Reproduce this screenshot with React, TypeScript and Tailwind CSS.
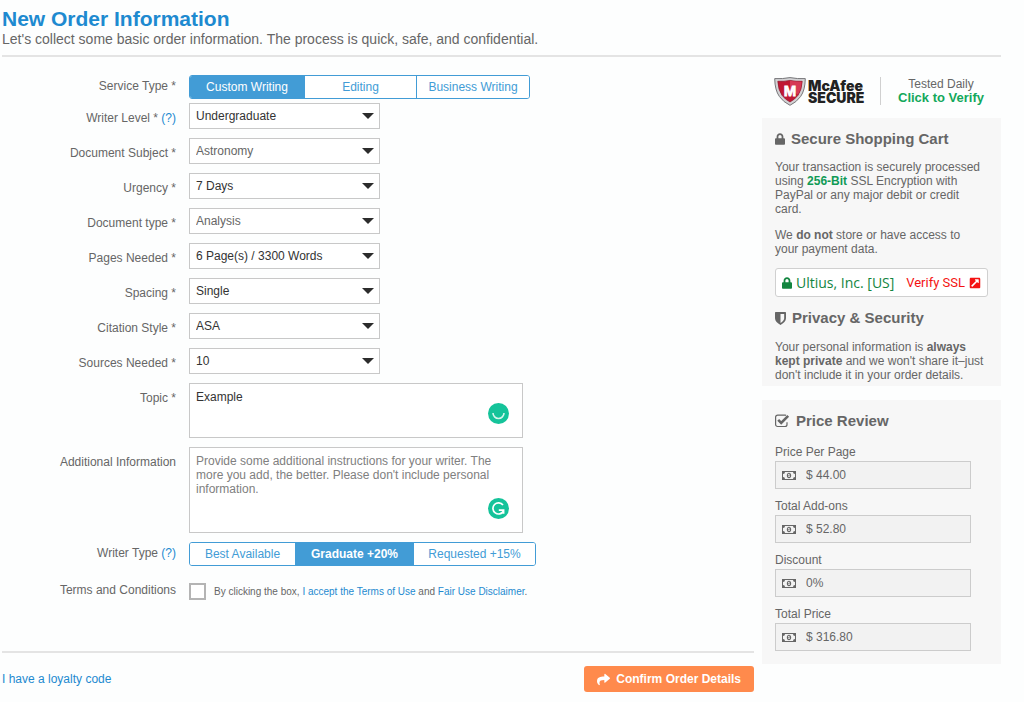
import React, { useState } from 'react';
import { FaExternalLinkSquareAlt, FaLock, FaShare } from 'react-icons/fa';

const selectFields = [
  { id: 'level', label: 'Writer Level *', help: true, value: 'Undergraduate', others: ['High School', 'Graduate'] },
  { id: 'subject', label: 'Document Subject *', value: 'Astronomy', muted: true, others: ['Biology', 'History'] },
  { id: 'urgency', label: 'Urgency *', value: '7 Days', others: ['3 Days', '24 Hours'] },
  { id: 'document', label: 'Document type *', value: 'Analysis', muted: true, others: ['Essay', 'Report'] },
  { id: 'pages', label: 'Pages Needed *', value: '6 Page(s) / 3300 Words', others: ['7 Page(s) / 3850 Words'] },
  { id: 'spacing', label: 'Spacing *', value: 'Single', others: ['Double'] },
  { id: 'citation', label: 'Citation Style *', value: 'ASA', others: ['APA', 'MLA'] },
  { id: 'sources', label: 'Sources Needed *', value: '10', others: ['5', '15'] }
];

const prices = [
  { id: 'per-page', label: 'Price Per Page', value: '$ 44.00' },
  { id: 'addons', label: 'Total Add-ons', value: '$ 52.80' },
  { id: 'discount', label: 'Discount', value: '0%' },
  { id: 'total', label: 'Total Price', value: '$ 316.80' }
];

const HelpLink: React.FC = () => (
  <a href="#help" className="text-[#1e8ad0]">(?)</a>
);

interface RowProps {
  label: React.ReactNode;
  htmlFor?: string;
  children: React.ReactNode;
  className?: string;
  labelPadding?: string;
}

const Row: React.FC<RowProps> = ({ label, htmlFor, children, className = 'mb-[9px]', labelPadding = 'pt-1.5' }) => (
  <div className={`flex items-start ${className}`}>
    <div className={`mr-[13px] w-[176px] shrink-0 text-right leading-[18px] ${labelPadding}`}>
      {htmlFor ? <label htmlFor={htmlFor}>{label}</label> : label}
    </div>
    <div className="min-w-0 flex-1">{children}</div>
  </div>
);

interface ButtonGroupProps {
  label: string;
  options: { name: string; width: string }[];
  initial: number;
  boldActive?: boolean;
}

const ButtonGroup: React.FC<ButtonGroupProps> = ({ label, options, initial, boldActive }) => {
  const [active, setActive] = useState(initial);
  return (
    <div
      role="group"
      aria-label={label}
      className="flex h-6 w-fit overflow-hidden rounded-[3px] border border-[#429cd6]"
    >
      {options.map((option, index) => (
        <button
          key={option.name}
          type="button"
          aria-pressed={index === active}
          onClick={() => setActive(index)}
          className={`${option.width} ${index > 0 ? 'border-l border-[#429cd6]' : ''} ${
            index === active ? 'bg-[#429cd6] text-white' : 'bg-white text-[#429cd6]'
          } ${index === active && boldActive ? 'font-bold' : ''}`}
        >
          {option.name}
        </button>
      ))}
    </div>
  );
};

const ShieldIcon: React.FC = () => (
  <svg viewBox="0 0 12 14" className="h-[13px] w-[11px]" aria-hidden="true">
    <path
      fill="currentColor"
      fillRule="evenodd"
      d="M.7 0h10.6c.4 0 .7.3.7.7v6.1c0 3.2-2.6 5.5-6 7.2C2.6 12.3 0 10 0 6.8V.7C0 .3.3 0 .7 0ZM6 2v9.800c2.400-1.300 4-2.900 4-5V2H6Z"
    />
  </svg>
);

const CheckSquareIcon: React.FC = () => (
  <svg viewBox="0 0 15 14" className="h-3.5 w-[15px]" fill="none" stroke="currentColor" aria-hidden="true">
    <path strokeWidth="1.2" d="M12 8.300v2.200a2 2 0 0 1-2 2H2.600a2 2 0 0 1-2-2V3.200a2 2 0 0 1 2-2H10q.6 0 1 .2" />
    <path strokeWidth="2.6" d="m3.200 5.800 3 3 7-7" />
  </svg>
);

const MoneyIcon: React.FC = () => (
  <svg viewBox="0 0 14 9" className="h-[9px] w-3.5 shrink-0" aria-hidden="true">
    <path
      fill="currentColor"
      fillRule="evenodd"
      d="M0 0h14v9H0ZM3 1a2 2 0 0 1-2 2v3a2 2 0 0 1 2 2h8a2 2 0 0 1 2-2V3a2 2 0 0 1-2-2Z"
    />
    <path
      fill="currentColor"
      fillRule="evenodd"
      d="M7 1.700c1.300 0 2.200 1.200 2.200 2.800S8.300 7.300 7 7.300 4.800 6.100 4.800 4.500 5.700 1.700 7 1.700ZM6.800 2.700l-1 .9.400.5.400-.3v1.600H6v.7h2v-.7h-.5V2.700Z"
    />
  </svg>
);

const McAfeeShield: React.FC = () => (
  <svg viewBox="0 0 32 30" className="h-[30px] w-8 shrink-0" aria-hidden="true">
    <path
      fill="#d3d3d5"
      stroke="#77777a"
      strokeWidth="1"
      d="M.7 2.600Q8.500 3 16 1.600q7.500 1.400 15.300 1-.2 11.600-4.700 17.900Q22.500 26.200 16 29.300 9.500 26.200 5.400 20.500.9 14.200.7 2.600Z"
    />
    <path fill="#c01833" stroke="#8c1128" strokeWidth=".7" d="M3.800 5.300Q10 5.600 16 4.400q6 1.200 12.200.9-.4 8.600-4.200 14-3.100 4.200-8 6.700-4.900-2.500-8-6.700-3.800-5.400-4.200-14Z" />
    <path fill="#d63a55" d="M16 4.800q6 1.100 11.700.9-.4 7.600-3.800 12.800L16 13.500Z" />
    <text x="16" y="19.500" textAnchor="middle" fill="#fff" stroke="#fff" strokeWidth=".8" fontSize="15" fontWeight="700">
      M
    </text>
  </svg>
);

const SectionTitle: React.FC<{ icon: React.ReactNode; children: React.ReactNode }> = ({ icon, children }) => (
  <h2 className="flex items-center gap-1.5 text-[15px] font-bold leading-5">
    {icon}
    {children}
  </h2>
);

const App: React.FC = () => (
  <div className="min-h-screen bg-[#fdfefe] pl-0.5 pr-[23px] pt-2 font-['Liberation_Sans',Arial,sans-serif] text-xs text-[#666]">
    <header className="border-b-2 border-[#e4e4e4] pb-[7px]">
      <h1 className="text-[21px] font-bold leading-[22px] text-[#1e8ad0]">New Order Information</h1>
      <p className="text-sm leading-[18px]">
        Let's collect some basic order information. The process is quick, safe, and confidential.
      </p>
    </header>

    <div className="flex gap-2">
      {/* Order form */}
      <form className="min-w-0 flex-1 pt-[18px]" onSubmit={(e) => e.preventDefault()}>
        <div className="-ml-0.5">
          <Row label="Service Type *" className="mb-1" labelPadding="pt-0.5">
            <ButtonGroup
              label="Service Type"
              initial={0}
              options={[
                { name: 'Custom Writing', width: 'w-[114px]' },
                { name: 'Editing', width: 'w-[112px]' },
                { name: 'Business Writing', width: 'w-[113px]' }
              ]}
            />
          </Row>

          {selectFields.map((field) => (
            <Row key={field.id} htmlFor={field.id} label={<>{field.label} {field.help && <HelpLink />}</>}>
              <div className="relative w-[191px]">
                <select
                  id={field.id}
                  className={`block h-[26px] w-full appearance-none border border-[#c8c8c8] bg-white pl-1.5 ${
                    field.muted ? 'text-[#666]' : 'text-[#333]'
                  }`}
                >
                  <option>{field.value}</option>
                  {field.others.map((other) => (
                    <option key={other}>{other}</option>
                  ))}
                </select>
                <svg viewBox="0 0 12 6" className="pointer-events-none absolute right-1.5 top-2.5 h-1.5 w-3" aria-hidden="true">
                  <path d="M0 0h12L6 6Z" fill="#2c2c2c" />
                </svg>
              </div>
            </Row>
          ))}

          <Row label="Topic *" htmlFor="topic">
            <div className="relative w-[334px]">
              <textarea
                id="topic"
                defaultValue="Example"
                className="block h-[55px] w-full resize-none border border-[#c8c8c8] bg-white px-1.5 py-1.5 leading-3.5 text-[#333]"
              />
              <svg viewBox="0 0 21 21" className="absolute bottom-3.5 right-3.5 size-[21px]" aria-hidden="true">
                <circle cx="10.500" cy="10.500" r="10.500" fill="#15c39a" />
                <path d="M5 10a5.500 5.500 0 0 0 11 0" fill="none" stroke="#d5f5ec" strokeWidth="1.600" />
              </svg>
            </div>
          </Row>

          <Row label="Additional Information" htmlFor="additional">
            <div className="relative w-[334px]">
              <textarea
                id="additional"
                placeholder="Provide some additional instructions for your writer. The more you add, the better. Please don't include personal information."
                className="block h-[86px] w-full resize-none border border-[#c8c8c8] bg-white px-1.5 py-1.5 leading-3.5 placeholder:text-[#808080]"
              />
              <svg viewBox="0 0 21 21" className="absolute bottom-3.5 right-3.5 size-[21px]" aria-hidden="true">
                <circle cx="10.500" cy="10.500" r="10.500" fill="#15c39a" />
                <path d="M15 7A5.600 5.600 0 1 0 15.500 13M10.800 12.200h4.800v3.500" fill="none" stroke="#fff" strokeWidth="1.700" />
              </svg>
            </div>
          </Row>

          <Row label={<>Writer Type <HelpLink /></>} className="mb-[13px]" labelPadding="pt-0.5">
            <ButtonGroup
              label="Writer Type"
              initial={1}
              boldActive
              options={[
                { name: 'Best Available', width: 'w-[105px]' },
                { name: 'Graduate +20%', width: 'w-[118px]' },
                { name: 'Requested +15%', width: 'w-[122px]' }
              ]}
            />
          </Row>

          <Row label="Terms and Conditions" className="mb-[51px]" labelPadding="pt-0.5">
            <div className="flex items-center gap-2 pt-1">
              <input
                id="terms"
                type="checkbox"
                className="size-[17px] shrink-0 appearance-none border-2 border-[#b4b4b4] bg-white checked:bg-[#429cd6]"
              />
              <label htmlFor="terms" className="text-[10px] leading-3.5">
                By clicking the box, <a href="#terms-of-use" className="text-[#1e8ad0]">I accept the Terms of Use</a> and{' '}
                <a href="#fair-use" className="text-[#1e8ad0]">Fair Use Disclaimer</a>.
              </label>
            </div>
          </Row>
        </div>

        <div className="flex items-center justify-between border-t-2 border-[#e4e4e4] pt-[13px]">
          <a href="#loyalty" className="text-[#1e8ad0]">I have a loyalty code</a>
          <button
            type="submit"
            className="flex h-[26px] items-center gap-1.5 rounded-[3px] bg-[#ff8a4c] px-[13px] font-bold text-white"
          >
            <FaShare className="size-[13px]" />
            Confirm Order Details
          </button>
        </div>
      </form>

      {/* Sidebar */}
      <aside className="w-[239px] shrink-0 pt-[19px]">
        <div className="flex h-[42px] items-start gap-0.5 pl-3">
          <McAfeeShield />
          <div className="w-[58px] pt-1 font-[Inter,sans-serif] text-sm font-black leading-3 text-[#222]">
            <div>McAfee</div>
            <div>SECURE</div>
          </div>
          <div className="ml-3 mt-px flex h-7 flex-1 flex-col items-center border-l border-[#d0d0d0] text-center">
            <span className="leading-3.5">Tested Daily</span>
            <a href="#verify" className="text-[13px] font-bold leading-3.5 text-[#13a85b]">Click to Verify</a>
          </div>
        </div>

        <section className="mb-3.5 bg-[#f7f7f7] px-[13px] pb-1 pt-[11px] leading-3.5">
          <SectionTitle icon={<FaLock className="h-3 w-2.5" />}>Secure Shopping Cart</SectionTitle>
          <p className="mt-[11px]">
            Your transaction is securely processed using <b className="text-[#109a55]">256-Bit</b> SSL Encryption with PayPal or any major debit or credit card.
          </p>
          <p className="mb-3 mt-3 pr-3">
            We <b>do not</b> store or have access to your payment data.
          </p>
          <a href="#ssl" className="flex h-[29px] items-center rounded-[3px] border border-[#d0d0d0] bg-white px-1.5 font-['Open_Sans',sans-serif]">
            <FaLock className="mr-1 h-3 w-2.5 text-[#12853f]" />
            <span className="text-sm text-[#12853f]">Ultius, Inc. [US]</span>
            <span className="ml-auto font-[Roboto,sans-serif] text-[13px] text-[#f41212]">Verify SSL</span>
            <FaExternalLinkSquareAlt className="ml-1 size-3 text-[#f41212]" />
          </a>
          <div className="mt-[11px]">
            <SectionTitle icon={<ShieldIcon />}>Privacy &amp; Security</SectionTitle>
          </div>
          <p className="mt-3">
            Your personal information is <b>always kept private</b> and we won't share it–just don't include it in your order details.
          </p>
        </section>

        <section className="bg-[#f7f7f7] px-[13px] pb-[13px] pt-[11px]">
          <SectionTitle icon={<CheckSquareIcon />}>Price Review</SectionTitle>
          <div className="mt-3 space-y-2">
            {prices.map((price) => (
              <div key={price.id}>
                <label htmlFor={price.id} className="block leading-[18px]">{price.label}</label>
                <div className="flex h-7 w-[196px] items-center gap-2.5 border border-[#cccccc] bg-[#f2f2f2] px-1.5">
                  <MoneyIcon />
                  <input id={price.id} readOnly value={price.value} className="min-w-0 flex-1 bg-transparent" />
                </div>
              </div>
            ))}
          </div>
        </section>
      </aside>
    </div>
  </div>
);

export default App;
